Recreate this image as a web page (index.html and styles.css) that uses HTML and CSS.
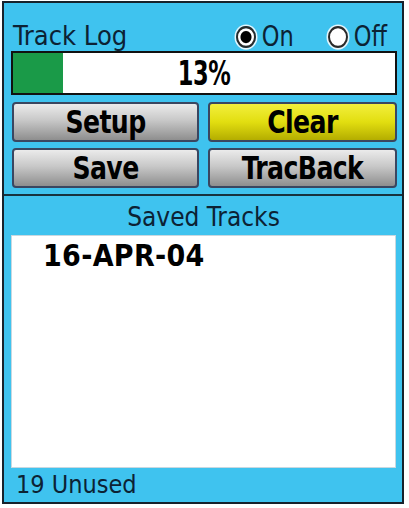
FILE: index.html
```html
<!DOCTYPE html>
<html>
<head>
<meta charset="utf-8">
<link rel="stylesheet" href="styles.css">
</head>
<body>
<div class="device">
  <div class="top">
    <div class="log-row">
      <span class="title">Track Log</span>
      <div class="radios">
        <span class="radio on"><span class="dot"></span>On</span>
        <span class="radio"><span class="dot"></span>Off</span>
      </div>
    </div>
    <div class="bar">
      <div class="fill" style="width:13%"></div>
      <span class="pct">13%</span>
    </div>
    <div class="buttons">
      <div class="btn"><span class="lbl">Setup</span></div>
      <div class="btn yellow"><span class="lbl">Clear</span></div>
      <div class="btn"><span class="lbl">Save</span></div>
      <div class="btn"><span class="lbl">TracBack</span></div>
    </div>
  </div>
  <div class="saved">
    <div class="saved-title">Saved Tracks</div>
    <div class="list">
      <div class="item">16-APR-04</div>
    </div>
    <div class="footer">19 Unused</div>
  </div>
</div>
</body>
</html>
```
FILE: styles.css
```css
html, body {
  margin: 0;
  padding: 0;
  background: #ffffff;
}
.device {
  box-sizing: border-box;
  width: 402px;
  height: 503px;
  margin: 1px 0 0 2px;
  border: 2px solid #17222c;
  background: #3fc3ef;
  font-family: "DejaVu Sans Condensed", "DejaVu Sans", sans-serif;
  color: #0c2234;
  display: flex;
  flex-direction: column;
}
.top {
  padding: 17px 5px 0 8px;
  height: 193px;
  box-sizing: border-box;
  border-bottom: 2px solid #17323f;
}
.log-row {
  display: flex;
  align-items: center;
  justify-content: space-between;
  height: 32px;
}
.title {
  font-size: 27px;
  line-height: 32px;
  margin-left: 1px;
}
.radios {
  display: flex;
  gap: 34px;
  padding-right: 10px;
}
.radio {
  display: flex;
  align-items: center;
  font-size: 25px;
  gap: 3px;
  transform: scaleY(1.1);
}
.dot {
  width: 16px;
  height: 16px;
  border-radius: 50%;
  background: #ffffff;
  border: 2px solid #2a2a2a;
  box-shadow: 0 0 0 1.5px #e4f6fd;
  margin-right: 3px;
}
.radio.on .dot {
  background: radial-gradient(circle, #000 0 5px, #fff 6px);
}
.bar {
  position: relative;
  height: 44px;
  box-sizing: border-box;
  border: 2px solid #111;
  background: #ffffff;
  margin: -1px 0 0 -1px;
  display: flex;
  align-items: center;
  justify-content: center;
}
.fill {
  position: absolute;
  left: 0;
  top: 0;
  bottom: 0;
  background: #1a9a48;
}
.pct {
  position: relative;
  font-size: 25px;
  font-weight: bold;
  color: #000;
  transform: scaleY(1.35);
  letter-spacing: -0.5px;
}
.buttons {
  display: grid;
  grid-template-columns: 187px 189px;
  column-gap: 9px;
  row-gap: 6px;
  margin-top: 7px;
}
.btn {
  height: 40px;
  box-sizing: border-box;
  border: 2px solid #3a4660;
  border-radius: 4px;
  background: linear-gradient(#ebebeb, #c8c8c8 45%, #8e8e8e);
  display: flex;
  align-items: center;
  justify-content: center;
  color: #000;
}
.lbl {
  font-size: 28px;
  font-weight: bold;
  letter-spacing: -0.6px;
  transform: scaleY(1.15);
}
.btn.yellow {
  background: linear-gradient(#f2ef3c, #e2de10 50%, #b4ad00);
}
.saved {
  flex: 1;
  display: flex;
  flex-direction: column;
  padding: 0 6px 0 7px;
}
.saved-title {
  text-align: center;
  font-size: 26px;
  height: 39px;
  line-height: 42px;
}
.list {
  height: 231px;
  background: #ffffff;
  border: 1px solid #c8d8e0;
}
.item {
  font-size: 30px;
  font-weight: bold;
  color: #000;
  padding: 2px 0 0 31px;
  letter-spacing: 0.3px;
}
.footer {
  font-size: 25px;
  padding: 2px 0 0 5px;
}
```
